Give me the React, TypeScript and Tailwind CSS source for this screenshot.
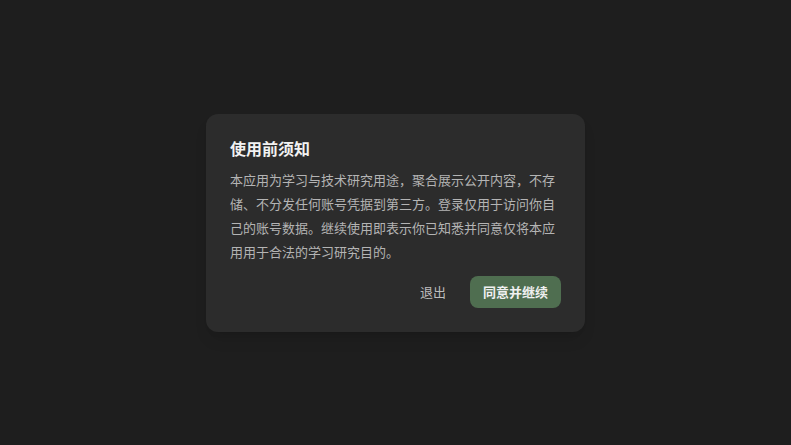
import { FC } from "react";

const font = { fontFamily: '"Noto Sans CJK SC", "Noto Sans", sans-serif' };

const NoticeDialog: FC = () => (
  <div className="w-[379px] rounded-xl bg-[#2c2c2c] px-6 pt-6 pb-6 shadow-lg">
    {/* Title */}
    <h2 className="text-base leading-5 font-bold text-[#f2f2f2]">使用前须知</h2>

    {/* Body */}
    <p className="mt-2.5 text-[13px] leading-6 text-[#b4b4b4]">
      本应用为学习与技术研究用途，聚合展示公开内容，不存储、不分发任何账号凭据到第三方。登录仅用于访问你自己的账号数据。继续使用即表示你已知悉并同意仅将本应用用于合法的学习研究目的。
    </p>

    {/* Actions */}
    <div className="mt-3 flex items-center justify-end gap-3">
      <button className="h-8 rounded-lg px-3 text-[13px] text-[#bdbdbd] hover:bg-white/5">退出</button>
      <button className="h-8 rounded-lg bg-[#4f6e50] px-[13px] text-[13px] font-bold text-[#f0f0f0] hover:bg-[#5a7b5b]">
        同意并继续
      </button>
    </div>
  </div>
);

export default function App() {
  return (
    <div className="flex h-[445px] w-full items-center justify-center bg-[#1e1e1e]" style={font}>
      <NoticeDialog />
    </div>
  );
}
